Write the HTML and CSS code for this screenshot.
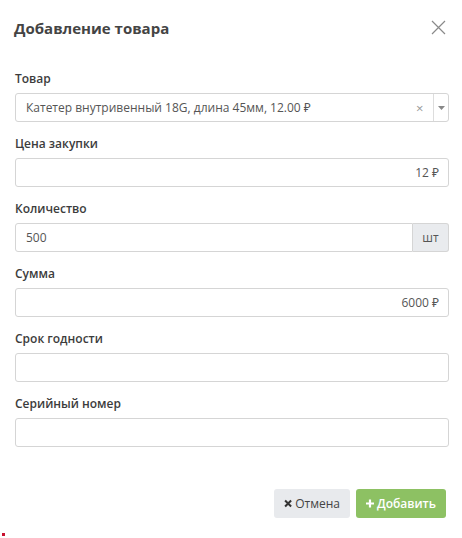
FILE: index.html
```html
<!DOCTYPE html>
<html lang="ru">
<head>
<meta charset="utf-8">
<title>Добавление товара</title>
<link rel="stylesheet" href="styles.css">
</head>
<body>
<div class="modal">
  <div class="modal-header">
    <h4 class="modal-title">Добавление товара</h4>
    <button class="close" type="button" aria-label="Закрыть">
      <svg width="15" height="15" viewBox="0 0 15 15"><path d="M1 1L14 14M14 1L1 14" stroke="#8a8a8a" stroke-width="1.2" fill="none"/></svg>
    </button>
  </div>
  <form class="modal-body">
    <div class="form-group">
      <label class="control-label">Товар</label>
      <div class="select">
        <span class="select-value">Катетер внутривенный 18G, длина 45мм, 12.00 ₽</span>
        <span class="select-clear">×</span>
        <span class="select-arrow"><svg width="7" height="4" viewBox="0 0 7 4"><path d="M0 0H7L3.5 4Z" fill="#888"/></svg></span>
      </div>
    </div>
    <div class="form-group">
      <label class="control-label">Цена закупки</label>
      <div class="form-control text-right">12 ₽</div>
    </div>
    <div class="form-group">
      <label class="control-label">Количество</label>
      <div class="input-group">
        <div class="form-control">500</div>
        <span class="input-addon">шт</span>
      </div>
    </div>
    <div class="form-group">
      <label class="control-label">Сумма</label>
      <div class="form-control text-right">6000 ₽</div>
    </div>
    <div class="form-group">
      <label class="control-label">Срок годности</label>
      <div class="form-control"></div>
    </div>
    <div class="form-group">
      <label class="control-label">Серийный номер</label>
      <div class="form-control"></div>
    </div>
  </form>
  <div class="modal-footer">
    <button class="btn btn-default" type="button">
      <svg width="9" height="9" viewBox="0 0 9 9"><path d="M1.2 1.2L7.8 7.8M7.8 1.2L1.2 7.8" stroke="#333" stroke-width="2.2" fill="none"/></svg>Отмена
    </button>
    <button class="btn btn-success" type="button">
      <svg width="11" height="11" viewBox="0 0 11 11"><path d="M5.5 0V11M0 5.5H11" stroke="#fff" stroke-width="3" fill="none"/></svg>Добавить
    </button>
  </div>
  <div class="marker"></div>
</div>
</body>
</html>
```

FILE: styles.css
```css
* { box-sizing: border-box; }

html, body {
  margin: 0;
  background: #fff;
}

body {
  font-family: "Open Sans", "Noto Sans", sans-serif;
  font-size: 12px;
  color: #555;
}

.modal {
  width: 462px;
  height: 538px;
  padding: 0 13px 0 15px;
  display: flex;
  flex-direction: column;
}

.modal-header {
  display: flex;
  align-items: center;
  justify-content: space-between;
  height: 55px;
}

.modal-title {
  margin: 0 0 0 -1px;
  font-size: 15px;
  font-weight: 700;
  color: #444;
}

.close {
  border: 0;
  background: none;
  padding: 0;
  margin-right: 3px;
  display: flex;
}

.modal-body {
  display: flex;
  flex-direction: column;
  gap: 12px;
  padding-top: 14px;
}

.form-group {
  display: flex;
  flex-direction: column;
}

.control-label {
  font-size: 12px;
  font-weight: 600;
  line-height: 20px;
  margin-bottom: 4px;
  color: #3c3c3c;
}

.form-control {
  height: 29px;
  border: 1px solid #d5d5d5;
  border-radius: 3px;
  padding: 0 9px 0 10px;
  display: flex;
  align-items: center;
  color: #555;
}

.text-right { justify-content: flex-end; }

.select {
  height: 29px;
  border: 1px solid #d5d5d5;
  border-radius: 3px;
  display: flex;
  align-items: center;
}

.select-value {
  flex: 1;
  padding-left: 10px;
  color: #555;
}

.select-clear {
  width: 17px;
  color: #999;
  font-size: 13px;
}

.select-arrow {
  width: 15px;
  height: 100%;
  border-left: 1px solid #ddd;
  display: flex;
  align-items: center;
  justify-content: center;
}

.input-group {
  display: flex;
}

.input-group .form-control {
  flex: 1;
  border-radius: 3px 0 0 3px;
}

.input-addon {
  width: 36px;
  height: 29px;
  border: 1px solid #d5d5d5;
  border-left: 0;
  border-radius: 0 3px 3px 0;
  background: #e9ebee;
  display: flex;
  align-items: center;
  justify-content: center;
  color: #555;
}

.modal-footer {
  display: flex;
  justify-content: flex-end;
  gap: 6px;
  margin-top: 42px;
  padding-right: 3px;
}

.btn {
  height: 29px;
  border: 0;
  border-radius: 3px;
  font-family: inherit;
  font-size: 12px;
  display: flex;
  align-items: center;
  gap: 3px;
  padding: 0 10px;
}

.btn-default {
  background: #e8eaed;
  color: #444;
  width: 76px;
}

.btn-success {
  background: #8dc163;
  color: #fff;
  font-weight: 600;
  width: 90px;
}

.marker {
  width: 3px;
  height: 3px;
  background: #c8102e;
  margin: auto 0 2px -13px;
}
```
